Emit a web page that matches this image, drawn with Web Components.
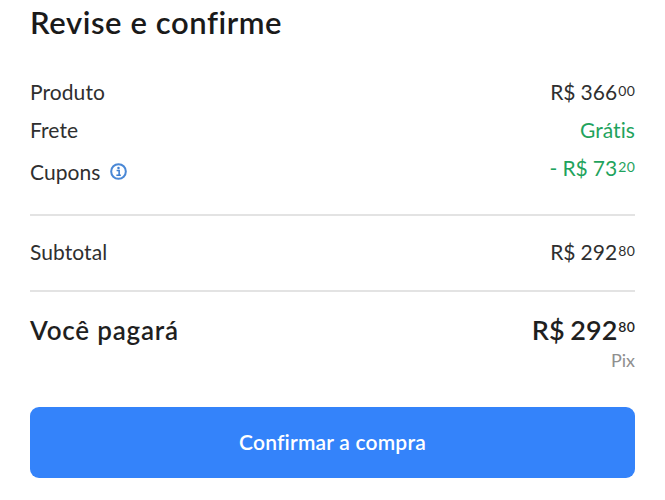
<!DOCTYPE html>
<html lang="pt-BR">
<head>
<meta charset="utf-8">
<title>Revise e confirme</title>
<style>
  html, body { margin: 0; background: #fff; }
  body { font-family: "Lato", "Liberation Sans", sans-serif; color: #1f1f1f; }
</style>
</head>
<body>
<review-page>
  <h-title slot="title">Revise e confirme</h-title>

  <summary-row style="--row-h:38px; margin-top:31px">
    Produto
    <price-tag slot="value" int="R$ 366" cents="00"></price-tag>
  </summary-row>
  <summary-row style="--row-h:38px">
    Frete
    <span slot="value" style="color:#1fa35d">Grátis</span>
  </summary-row>
  <summary-row style="--row-h:46px; --value-shift:-4px">
    <span>Cupons</span><info-icon></info-icon>
    <price-tag slot="value" int="- R$ 73" cents="20" style="color:#1fa35d"></price-tag>
  </summary-row>

  <h-rule style="margin-top:20px"></h-rule>

  <summary-row style="--row-h:74px; padding-bottom:4px">
    Subtotal
    <price-tag slot="value" int="R$ 292" cents="80"></price-tag>
  </summary-row>

  <h-rule></h-rule>

  <total-block int="R$ 292" cents="80" method="Pix">Você pagará</total-block>

  <confirm-button>Confirmar a compra</confirm-button>
</review-page>

<script>
// Small page, one element per visual piece. Order of define() does not matter.
class ReviewPage extends HTMLElement {
  constructor() {
    super();
    this.attachShadow({ mode: "open" }).innerHTML = `
      <style>
        :host { display: flex; flex-direction: column; padding: 0 30px; width: 605px; height: 500px; }
      </style>
      <slot name="title"></slot>
      <slot></slot>`;
  }
}

class HTitle extends HTMLElement {
  constructor() {
    super();
    this.attachShadow({ mode: "open" }).innerHTML = `
      <style>
        :host { display: block; height: 41px; font-size: 31px; line-height: 45px; font-weight: 600; letter-spacing: .58px; color: #1a1a1a; }
      </style>
      <slot></slot>`;
  }
}

class SummaryRow extends HTMLElement {
  constructor() {
    super();
    this.attachShadow({ mode: "open" }).innerHTML = `
      <style>
        :host { display: flex; align-items: center; justify-content: space-between; box-sizing: border-box; height: var(--row-h, 38px); font-size: 21px; letter-spacing: .08px; word-spacing: -.5px; color: #2f2f2f; }
        .label { display: flex; align-items: center; gap: 9px; }
        .value { position: relative; top: var(--value-shift, 0); }
      </style>
      <div class="label"><slot></slot></div>
      <div class="value"><slot name="value"></slot></div>`;
  }
}

class PriceTag extends HTMLElement {
  constructor() {
    super();
    this.attachShadow({ mode: "open" }).innerHTML = `
      <style>
        :host { display: inline-flex; align-items: flex-start; }
        sup { font-size: 14px; line-height: 1; margin-left: 1px; margin-top: 5px; vertical-align: baseline; letter-spacing: .2px; }
      </style>
      <span id="int"></span><sup id="cents"></sup>`;
  }
  connectedCallback() {
    this.shadowRoot.getElementById("int").textContent = this.getAttribute("int");
    this.shadowRoot.getElementById("cents").textContent = this.getAttribute("cents");
  }
}

class InfoIcon extends HTMLElement {
  constructor() {
    super();
    this.attachShadow({ mode: "open" }).innerHTML = `
      <style>
        :host { display: inline-flex; width: 17px; height: 17px; }
      </style>
      <svg width="17" height="17" viewBox="0 0 16 16" fill="none">
        <circle cx="8" cy="8" r="6.9" stroke="#4a88d6" stroke-width="1.9"/>
        <circle cx="8" cy="4.7" r="1.2" fill="#3f7fd0"/>
        <path d="M6.2 7.1h2.4v4.2M6 11.5h4.2" stroke="#3f7fd0" stroke-width="1.5"/>
      </svg>`;
  }
}

class HRule extends HTMLElement {
  constructor() {
    super();
    this.attachShadow({ mode: "open" }).innerHTML = `
      <style>
        :host { display: block; height: 2px; background: #e3e3e3; }
      </style>`;
  }
}

class TotalBlock extends HTMLElement {
  constructor() {
    super();
    this.attachShadow({ mode: "open" }).innerHTML = `
      <style>
        :host { display: flex; justify-content: space-between; height: 115px; padding-top: 19px; box-sizing: border-box; color: #1f1f1f; }
        .label { font-size: 26px; font-weight: 600; line-height: 38px; letter-spacing: .8px; }
        .right { display: flex; flex-direction: column; align-items: flex-end; }
        .amount { display: flex; align-items: flex-start; font-size: 27px; font-weight: 600; line-height: 38px; word-spacing: -1px; }
        sup { font-size: 14px; line-height: 1; margin: 9px 0 0 1px; font-weight: 600; letter-spacing: .2px; }
        .method { font-size: 18px; line-height: 22px; color: #8f8f8f; }
      </style>
      <div class="label"><slot></slot></div>
      <div class="right">
        <div class="amount"><span id="int"></span><sup id="cents"></sup></div>
        <div class="method" id="method"></div>
      </div>`;
  }
  connectedCallback() {
    const root = this.shadowRoot;
    root.getElementById("int").textContent = this.getAttribute("int");
    root.getElementById("cents").textContent = this.getAttribute("cents");
    root.getElementById("method").textContent = this.getAttribute("method");
  }
}

class ConfirmButton extends HTMLElement {
  constructor() {
    super();
    this.attachShadow({ mode: "open" }).innerHTML = `
      <style>
        :host { display: flex; align-items: center; justify-content: center; box-sizing: border-box; height: 71px; padding-bottom: 2px; border-radius: 9px; background: #3483fa; color: #fff; font-size: 21px; font-weight: 600; letter-spacing: .2px; }
      </style>
      <slot></slot>`;
  }
}

customElements.define("review-page", ReviewPage);
customElements.define("h-title", HTitle);
customElements.define("summary-row", SummaryRow);
customElements.define("price-tag", PriceTag);
customElements.define("info-icon", InfoIcon);
customElements.define("h-rule", HRule);
customElements.define("total-block", TotalBlock);
customElements.define("confirm-button", ConfirmButton);
</script>
</body>
</html>
